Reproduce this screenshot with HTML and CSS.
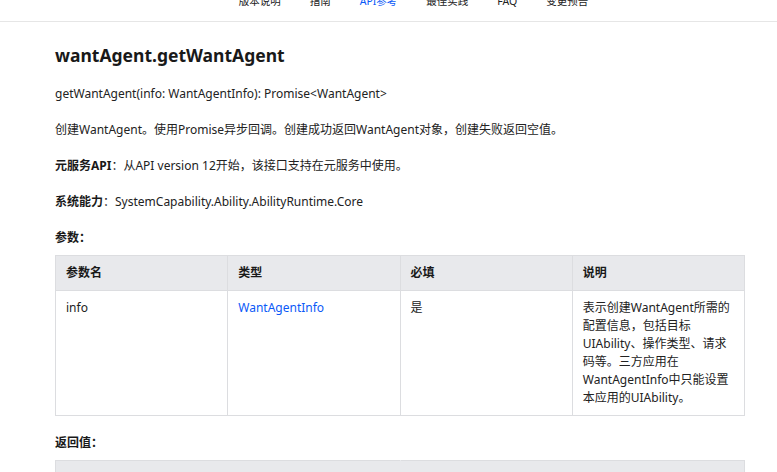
FILE: index.html
```html
<!DOCTYPE html>
<html lang="zh-CN">
<head>
    <meta charset="UTF-8">
    <meta name="viewport" content="width=device-width, initial-scale=1.0">
    <title>wantAgent.getWantAgent</title>
    <link rel="stylesheet" href="styles.css">
</head>
<body>

<div class="topnav">
    <div class="topnav-inner">
        <a class="nav-item">版本说明</a>
        <a class="nav-item">指南</a>
        <a class="nav-item active">API参考</a>
        <a class="nav-item">最佳实践</a>
        <a class="nav-item">FAQ</a>
        <a class="nav-item">变更预告</a>
    </div>
</div>

<div class="doc">
    <h2 class="doc-title">wantAgent.getWantAgent</h2>

    <p>getWantAgent(info: WantAgentInfo): Promise&lt;WantAgent&gt;</p>
    <p>创建WantAgent。使用Promise异步回调。创建成功返回WantAgent对象，创建失败返回空值。</p>
    <p><strong>元服务API</strong>：从API version 12开始，该接口支持在元服务中使用。</p>
    <p><strong>系统能力</strong>：SystemCapability.Ability.AbilityRuntime.Core</p>
    <p class="label"><strong>参数：</strong></p>

    <table class="param-table">
        <thead>
            <tr>
                <th>参数名</th>
                <th>类型</th>
                <th>必填</th>
                <th>说明</th>
            </tr>
        </thead>
        <tbody>
            <tr>
                <td>info</td>
                <td><a class="link">WantAgentInfo</a></td>
                <td>是</td>
                <td>表示创建WantAgent所需的配置信息，包括目标UIAbility、操作类型、请求码等。三方应用在WantAgentInfo中只能设置本应用的UIAbility。</td>
            </tr>
        </tbody>
    </table>

    <p class="label return-label"><strong>返回值：</strong></p>

    <table class="param-table return-table">
        <thead>
            <tr>
                <th>类型</th>
                <th>说明</th>
            </tr>
        </thead>
        <tbody>
            <tr>
                <td>Promise&lt;WantAgent&gt;</td>
                <td>Promise对象，返回WantAgent对象。</td>
            </tr>
        </tbody>
    </table>
</div>

</body>
</html>
```

FILE: styles.css
```css
body {
    margin: 0;
    background-color: #fff;
    color: #222;
    font-family: "Noto Sans", "Noto Sans CJK SC", sans-serif;
    font-size: 12px;
    line-height: 18px;
}
.topnav {
    height: 21px;
    overflow: hidden;
    border-bottom: 1px solid #e6e6e6;
}
.topnav-inner {
    display: flex;
    justify-content: center;
    gap: 29px;
    padding-left: 50px;
    margin-top: -6px;
    font-size: 10.5px;
    line-height: 14px;
}
.nav-item {
    color: #222;
    text-decoration: none;
}
.nav-item.active {
    color: #0a59f7;
}
.doc {
    padding: 0 32px 0 55px;
}
.doc-title {
    margin: 20px 0 17px;
    font-size: 17.5px;
    line-height: 26px;
    font-weight: 700;
    color: #191919;
}
.doc p {
    margin: 0 0 18px;
}
.doc strong {
    font-weight: 700;
    color: #191919;
}
.doc p.label {
    margin-bottom: 8px;
}
.doc p.return-label {
    margin-top: 18px;
    margin-bottom: 8px;
}
.param-table {
    width: 690px;
    table-layout: fixed;
    border-collapse: collapse;
}
.param-table th,
.param-table td {
    border: 1px solid #dcdde0;
    padding: 8px 8px 8px 10px;
    text-align: left;
    vertical-align: top;
    line-height: 18px;
}
.param-table th {
    background-color: #e8e9ec;
    font-weight: 700;
    color: #191919;
}
.return-table th {
    padding-top: 14px;
}
.return-table th:first-child {
    border-right-color: #e8e9ec;
}
.link {
    color: #0a59f7;
    text-decoration: none;
}
```
